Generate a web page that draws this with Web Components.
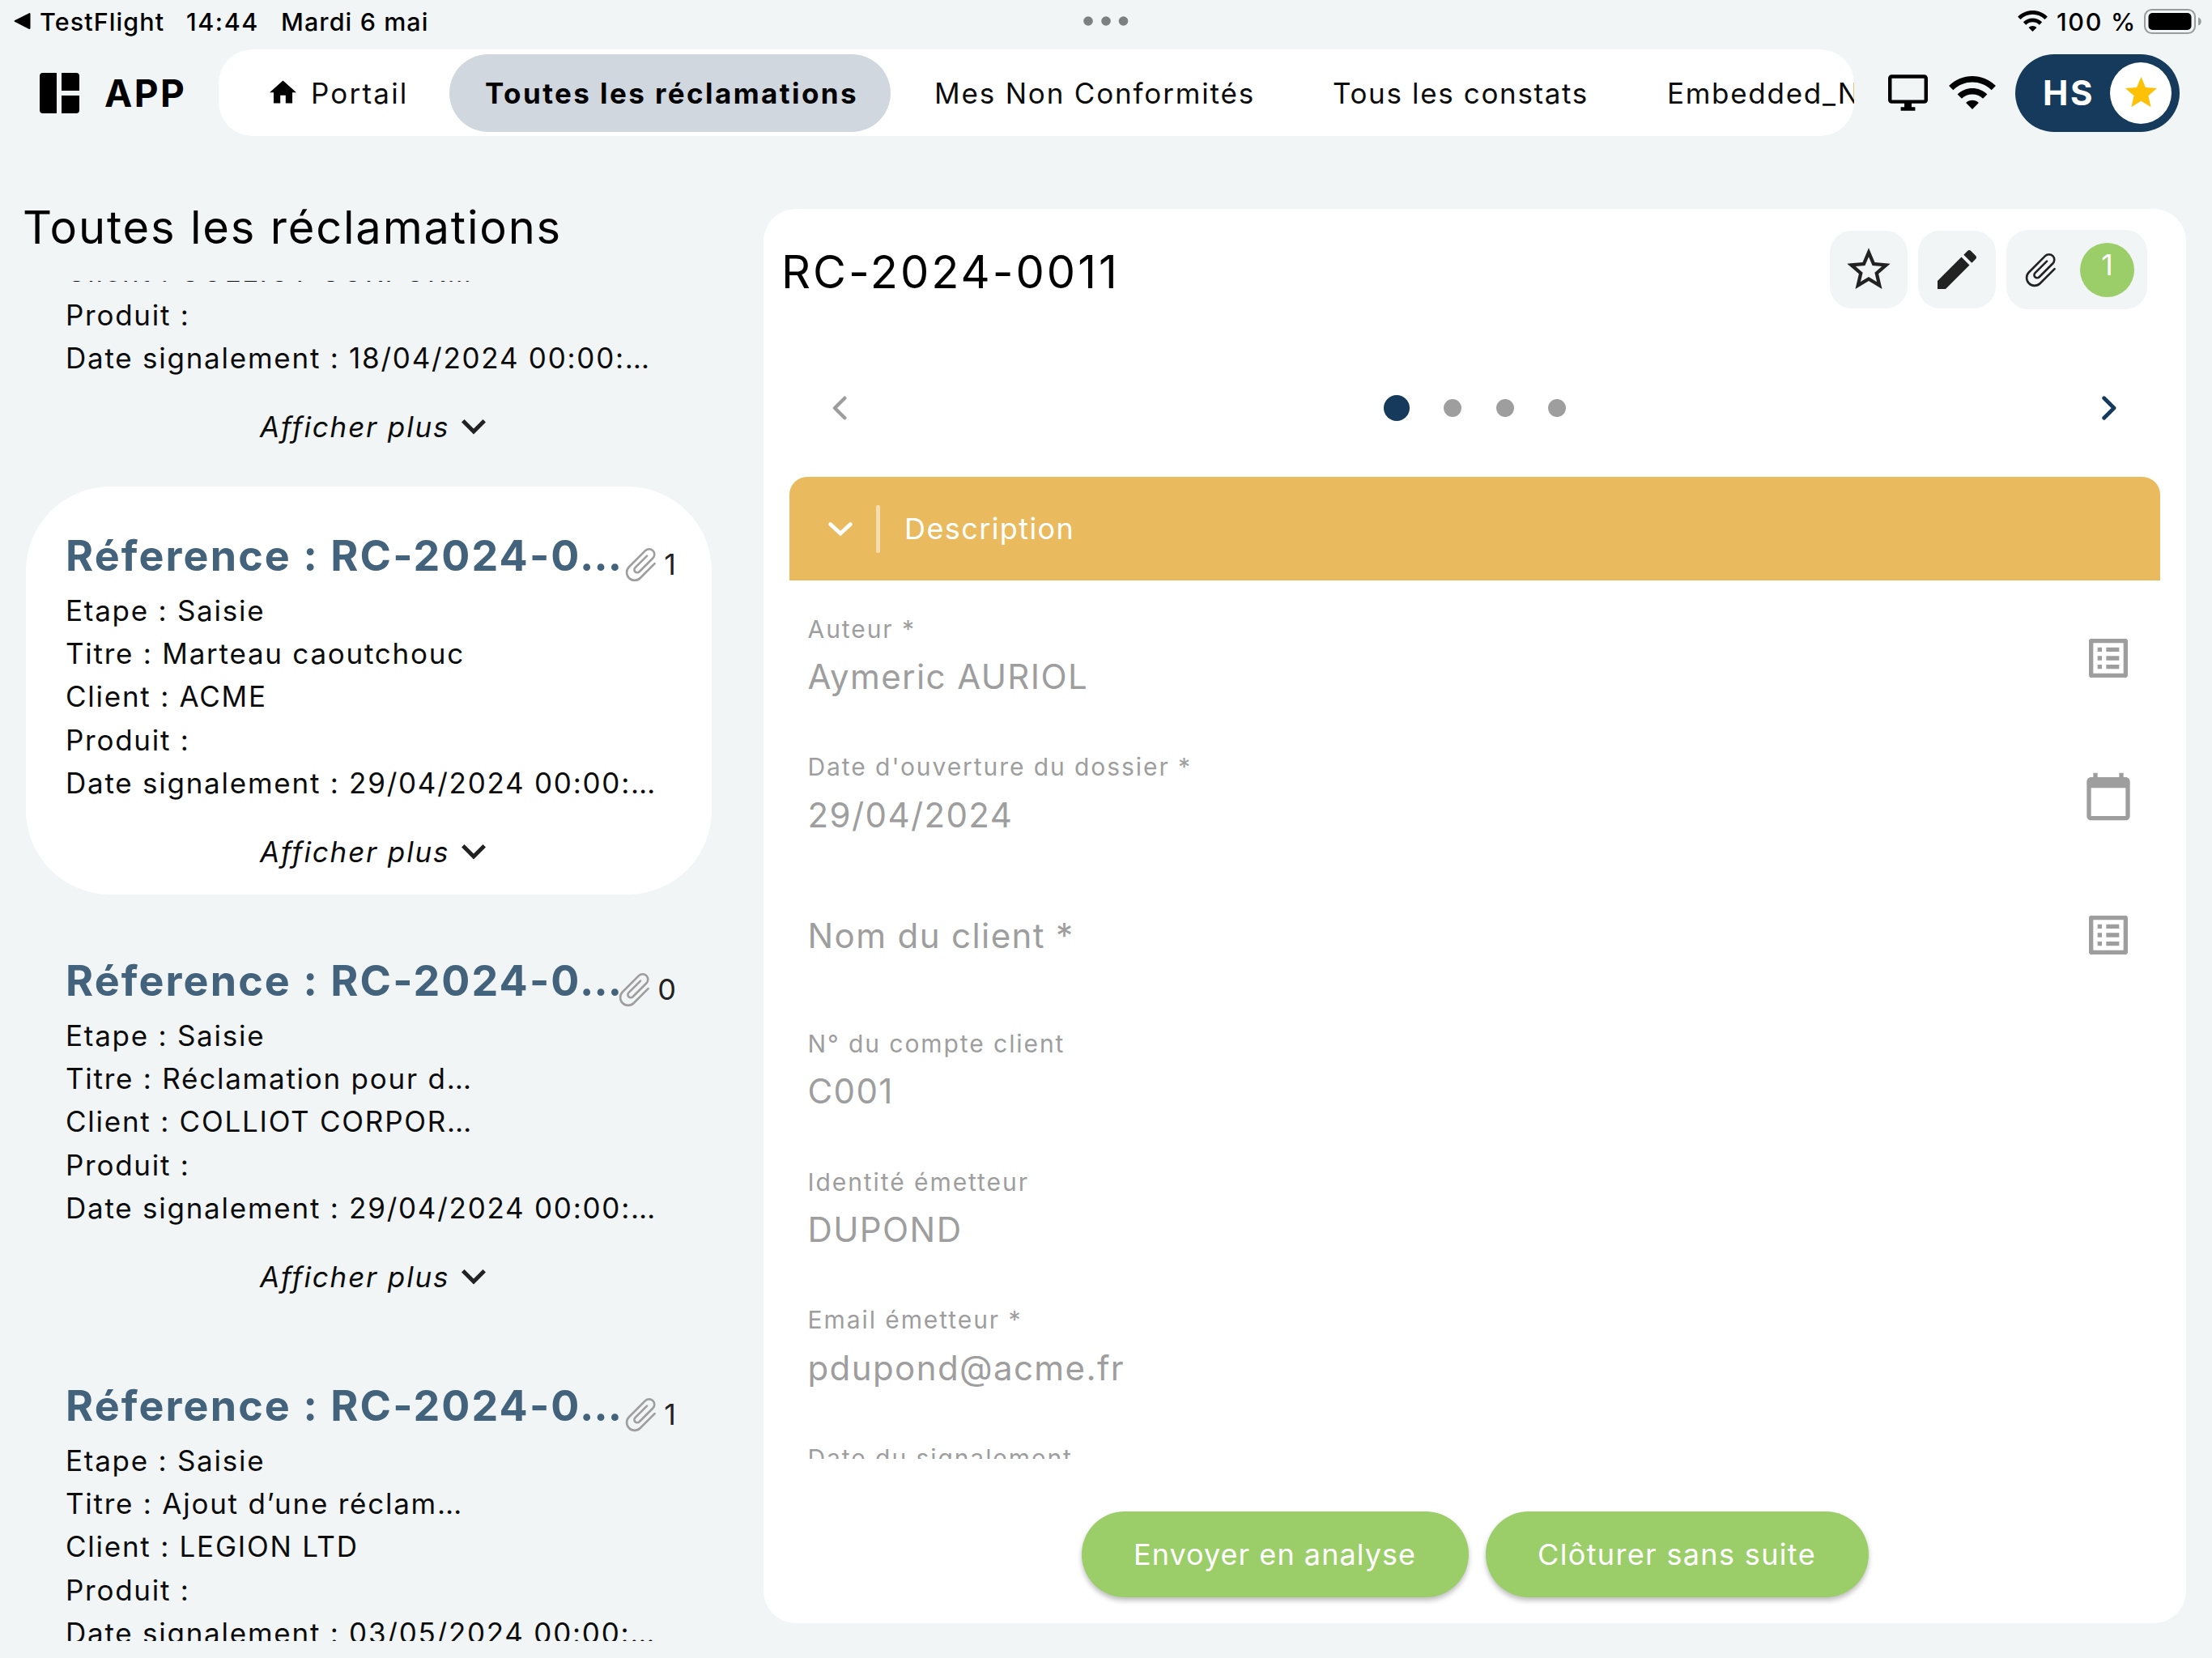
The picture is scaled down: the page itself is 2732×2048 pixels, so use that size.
<!DOCTYPE html>
<html lang="fr">
<head>
<meta charset="utf-8">
<title>Toutes les réclamations</title>
<style>
html,body{margin:0;height:100%;overflow:hidden}
body{background:#f1f5f6;color:#000;font-family:Inter,"Liberation Sans",sans-serif}
</style>
</head>
<body>
<claims-app></claims-app>
<script>
const define = (name, render) => customElements.define(name, class extends HTMLElement {
  constructor() { super(); this.attachShadow({ mode: 'open' }); }
  connectedCallback() { this.shadowRoot.innerHTML = render(this); }
});

const paperclip = '<path transform="rotate(45)" d="M11.5-12.7V12.6A9.75 9.75 0 0 1-8 12.6V-15.8A6.6 6.6 0 0 1 5.2-15.8V7.9A3.6 3.6 0 0 1-2 7.9V-12.7" fill="none" stroke="currentColor" stroke-width="2.6" stroke-linecap="round"/>';
const wifi = '<path d="M1 9l2 2c4.97-4.97 13.03-4.97 18 0l2-2C16.93 2.93 7.08 2.93 1 9zm8 8l3 3 3-3c-1.65-1.66-4.34-1.66-6 0zm-4-4l2 2c2.76-2.76 7.24-2.76 10 0l2-2C15.14 9.14 8.87 9.14 5 13z"/>';
/* name: [viewBox, width, height, content] */
const ICONS = {
  back: ['0 0 21 20', 21, 20, '<path d="M1 9.2Q0 10 1 10.8L18.5 19.7Q20.5 20.5 20.5 18.5V1.5Q20.5-.5 18.5.4Z"/>'],
  more: ['0 0 56 12', 56, 12, '<g fill="#7d8081"><circle cx="6" cy="6" r="5.8"/><circle cx="28" cy="6" r="5.8"/><circle cx="49.5" cy="6" r="5.8"/></g>'],
  battery: ['0 0 71 31', 71, 31, '<rect x="1" y="1" width="62" height="29" rx="8.5" fill="none" stroke="#999c9d" stroke-width="2"/><rect x="5.5" y="5" width="53" height="21" rx="5"/><path d="M67 10.5c5 1.5 5 8.500 0 10z" fill="#999c9d"/>'],
  wifis: ['1 4.400 22 15.600', 37, 26, wifi],
  wifi: ['1 4.400 22 15.600', 58, 41, wifi],
  logo: ['0 0 50 50', 50, 50, '<path d="M5 0H22V50H5Q1 50 1 46V4Q1 0 5 0ZM28 0H46Q50 0 50 4V22H28ZM28 28H50V46Q50 50 46 50H28Z"/>'],
  home: ['2 3 20 17', 33, 29, '<path d="M10 20v-6h4v6h5v-8h3L12 3 2 12h3v8z"/>'],
  screen: ['1 2 22 20', 49, 45, '<path d="M21 2H3c-1.100 0-2 .9-2 2v12c0 1.100.9 2 2 2h7v2H8v2h8v-2h-2v-2h7c1.100 0 2-.9 2-2V4c0-1.100-.9-2-2-2zm0 14H3V4h18v12z"/>'],
  star: ['0 0 24 24', 47, 47, '<path d="M12 17.270L18.180 21l-1.640-7.030L22 9.240l-7.190-.61L12 2 9.190 8.630 2 9.240l5.460 4.730L5.820 21z"/>'],
  starline: ['0 0 24 24', 64, 64, '<path d="M22 9.240l-7.190-.62L12 2 9.190 8.630 2 9.240l5.460 4.730L5.820 21 12 17.270 18.180 21l-1.630-7.030L22 9.240zM12 15.400l-3.760 2.270 1-4.280-3.320-2.880 4.380-.38L12 6.100l1.710 4.040 4.380.38-3.320 2.880 1 4.280L12 15.400z"/>'],
  edit: ['0 0 24 24', 64, 64, '<path d="M3 17.250V21h3.750L17.810 9.940l-3.750-3.750L3 17.250zM20.710 7.040c.39-.39.39-1.020 0-1.410l-2.340-2.340c-.39-.39-1.020-.39-1.410 0l-1.830 1.830 3.750 3.750 1.830-1.830z"/>'],
  clip: ['-19.500 -21 39 43', 39, 43, paperclip],
  more_down: ['6 7.840 12 7.410', 30, 18.5, '<path d="M7.410 7.840L12 12.420l4.590-4.580L18 9.250l-6 6-6-6z"/>'],
  down: ['0 0 30 17', 30, 17, '<path d="M2.600 2.600L15 14L27.400 2.600" fill="none" stroke="currentColor" stroke-width="4.800" stroke-linecap="round"/>'],
  left: ['0 0 18 30', 18, 30, '<path d="M15.300 2.700L3 15L15.300 27.300" fill="none" stroke="currentColor" stroke-width="4.400" stroke-linecap="round" stroke-linejoin="round"/>'],
  right: ['0 0 18 30', 18, 30, '<path d="M2.700 2.700L15 15L2.700 27.300" fill="none" stroke="currentColor" stroke-width="4.800" stroke-linecap="round" stroke-linejoin="round"/>'],
  list: ['0 0 24 24', 64, 64, '<path d="M19 5v14H5V5h14m1.100-2H3.900c-.5 0-.9.4-.9.9v16.200c0 .4.4.9.9.9h16.200c.4 0 .9-.5.9-.9V3.900c0-.5-.5-.9-.9-.9zM11 7h6v2h-6V7zm0 4h6v2h-6v-2zm0 4h6v2h-6zM7 7h2v2H7zm0 4h2v2H7zm0 4h2v2H7z"/>'],
  calendar: ['0 0 24 24', 64, 64, '<path d="M20 3h-1V1h-2v2H7V1H5v2H4c-1.100 0-2 .9-2 2v16c0 1.100.9 2 2 2h16c1.100 0 2-.9 2-2V5c0-1.100-.9-2-2-2zm0 18H4V8h16v13z"/>']
};

define('ui-icon', el => {
  const [box, w, h, body] = ICONS[el.getAttribute('name')];
  return `<style>:host{display:block;flex:none}svg{display:block;overflow:visible}</style>
  <svg viewBox="${box}" width="${w}" height="${h}" fill="currentColor">${body}</svg>`;
});

define('status-bar', () => `<style>
  :host{display:grid;grid-template-columns:1fr auto 1fr;align-items:center;height:52px;flex:none;font-size:30.5px;font-weight:450;white-space:nowrap}
  .l,.r{display:flex;align-items:center}
  .l{padding-left:17px;letter-spacing:1.100px}
  .l ui-icon{margin-right:11px}
  .app{width:181px}.time{width:117px;letter-spacing:1.6px}
  .r{justify-content:flex-end;padding-right:13px}
  .pc{width:108px;margin-left:11px;letter-spacing:1.7px}
  </style>
  <div class="l"><ui-icon name="back"></ui-icon><span class="app">TestFlight</span><span class="time">14:44</span><span>Mardi 6 mai</span></div>
  <ui-icon name="more"></ui-icon>
  <div class="r"><ui-icon name="wifis"></ui-icon><span class="pc">100 %</span><ui-icon name="battery"></ui-icon></div>`);

define('nav-item', el => `<style>
  :host{display:flex;align-items:center;flex:none;box-sizing:border-box;height:96px;font-size:35px;white-space:nowrap;color:#0c0c0d}
  :host([active]){background:#d0d7de;border-radius:48px;font-weight:700;color:#000}
  ui-icon{color:#000;margin-right:18px;margin-top:-2px}
  </style>${el.hasAttribute('icon') ? `<ui-icon name="${el.getAttribute('icon')}"></ui-icon>` : ''}<slot></slot>`);

define('app-header', () => `<style>
  :host{display:flex;align-items:center;height:107px;flex:none;margin-top:9px;padding-left:48px}
  .brand{width:141px;margin-left:31px;font-size:46px;font-weight:700;letter-spacing:2.43px}
  nav{display:flex;align-items:center;width:2020px;height:107px;flex:none;background:#fff;border-radius:42px;overflow:hidden}
  .screen{margin-left:42px}.wifi{margin:0 24px 0 26px}
  .user{display:flex;align-items:center;box-sizing:border-box;width:203px;height:96px;padding:0 10px 0 34px;justify-content:space-between;background:#153a5b;border-radius:48px;color:#fff;font-size:42px;font-weight:700;letter-spacing:2.6px}
  .badge{display:flex;align-items:center;justify-content:center;width:76px;height:76px;border-radius:50%;background:#fff;color:#ffc107}
  </style>
  <ui-icon name="logo"></ui-icon><span class="brand">APP</span>
  <nav>
    <nav-item icon="home" style="width:285px;padding-left:63px;letter-spacing:2.200px">Portail</nav-item>
    <nav-item active style="width:545px;padding-left:44px;letter-spacing:2.420px">Toutes les réclamations</nav-item>
    <nav-item style="width:492px;margin-left:54px;letter-spacing:1.830px">Mes Non Conformités</nav-item>
    <nav-item style="width:413px;letter-spacing:1.640px">Tous les constats</nav-item>
    <nav-item style="letter-spacing:1.710px">Embedded_NC</nav-item>
  </nav>
  <ui-icon class="screen" name="screen"></ui-icon><ui-icon class="wifi" name="wifi"></ui-icon>
  <div class="user"><span>HS</span><span class="badge"><ui-icon name="star"></ui-icon></span></div>`);

define('claim-card', el => {
  const a = n => el.getAttribute(n) || '';
  return `<style>
  :host{display:block;box-sizing:border-box;flex:none;width:847px;height:504px;padding:54.400px 44px 0 49px;border-radius:104px;color:#0c0c0d;white-space:nowrap}
  :host([selected]){background:#fff}
  .head{display:flex;height:64px;align-items:center;justify-content:space-between}
  .ref{flex:1;min-width:0;font-size:52px;line-height:64px;font-weight:700;letter-spacing:2.120px;color:#43627b}
  .files{display:flex;align-items:center;padding-top:20px;gap:9px;color:#9e9e9e}
  .files span{color:#222;font-size:36px}
  .row{font-size:35px;line-height:53.350px;letter-spacing:1.75px}
  .rows{margin-top:8.400px}
  .more{display:flex;align-items:center;height:50px;margin-top:33px;padding-left:240px;font-size:35px;font-style:italic;letter-spacing:1.84px}
  .more span{width:249px}.more ui-icon{color:#222}
  </style>
  <div class="head"><span class="ref">Réference : RC-2024-0…</span><div class="files"><ui-icon name="clip"></ui-icon><span>${a('files')}</span></div></div>
  <div class="rows">
    <div class="row">Etape : Saisie</div>
    <div class="row">Titre : ${a('titre')}</div>
    <div class="row">Client : ${a('client')}</div>
    <div class="row">Produit :</div>
    <div class="row">Date signalement : ${a('date')} 00:00:…</div>
  </div>
  <div class="more"><span>Afficher plus</span><ui-icon name="more_down"></ui-icon></div>`;
});

define('claims-list', () => `<style>
  :host{display:flex;flex-direction:column;width:943px;flex:none}
  h1{margin:0;box-sizing:border-box;height:179px;padding:78.500px 0 0 28px;font-size:56px;line-height:68px;font-weight:400;letter-spacing:1.82px}
  .scroll{display:flex;flex-direction:column;gap:21px;box-sizing:border-box;height:1680px;padding-left:32px;overflow:hidden}
  claim-card:first-child{margin-top:-271.200px}
  </style>
  <h1>Toutes les réclamations</h1>
  <div class="scroll">
    <claim-card titre="Réclamation pour d…" client="COLLIOT CORPOR…" date="18/04/2024" files="0"></claim-card>
    <claim-card selected titre="Marteau caoutchouc" client="ACME" date="29/04/2024" files="1"></claim-card>
    <claim-card titre="Réclamation pour d…" client="COLLIOT CORPOR…" date="29/04/2024" files="0"></claim-card>
    <claim-card titre="Ajout d’une réclam…" client="LEGION LTD" date="03/05/2024" files="1"></claim-card>
  </div>`);

define('form-field', el => {
  const l = el.getAttribute('label'), i = el.getAttribute('icon');
  return `<style>
  :host{display:flex;box-sizing:border-box;height:170.700px;flex:none;padding:0 64px 0 54.500px;color:#9e9e9e;white-space:nowrap}
  .text{flex:1;padding-top:41.500px}
  :host(:not([label])) .text{padding-top:67px}
  .label{font-size:30px;line-height:37px;margin-bottom:10.500px;letter-spacing:1.93px}
  .value{font-size:42px;line-height:60px;letter-spacing:1.4px}
  ui-icon{margin-top:64px}
  </style><div class="text">${l ? `<div class="label">${l}</div>` : ''}<div class="value"><slot></slot></div></div>${i ? `<ui-icon name="${i}"></ui-icon>` : ''}`;
});

define('action-button', () => `<style>
  :host{display:flex;align-items:center;justify-content:center;height:106.500px;border-radius:54px;background:#9bce69;color:#fff;font-size:36px;white-space:nowrap;box-shadow:0 4px 6px rgba(0,0,0,.26)}
  </style><slot></slot>`);

define('claim-detail', () => `<style>
  :host{display:flex;flex-direction:column;box-sizing:border-box;width:1757px;height:1747px;margin-top:90.300px;background:#fff;border-radius:40px;overflow:hidden}
  header{display:flex;align-items:center;height:150px;flex:none;padding:0 48px 0 22px;gap:13px}
  h2{flex:1;margin:0;padding-top:5px;font-size:56px;font-weight:400;letter-spacing:3px}
  .tool{display:flex;align-items:center;justify-content:center;box-sizing:border-box;width:96px;height:96px;border-radius:27px;background:#f1f5f6;color:#222}
  .tool.files{width:174px;height:98px;justify-content:space-between;padding:0 16px 0 23px}
  .count{width:67px;height:67px;border-radius:50%;background:#9bce69;color:#fff;font-size:36px;line-height:54px;text-align:center}
  .pager{display:flex;align-items:center;justify-content:space-between;height:100px;flex:none;margin:46px 86px 35px 85px;color:#153a5b}
  .dots{display:flex;align-items:center;gap:42.500px;padding-left:1px}
  .dots i{width:22px;height:22px;border-radius:50%;background:#9e9e9e}
  .dots i.on{width:32px;height:32px;background:#153a5b}
  .prev{color:#9e9e9e}
  .section{display:flex;align-items:center;height:128px;flex:none;margin:0 32px;padding-left:48px;background:#eaba5f;border-radius:22px 22px 0 0;color:#fff;font-size:36px;letter-spacing:1.4px}
  .bar{width:5px;height:59px;margin:0 30px 0 29px;border-radius:2px;background:rgba(255,255,255,.5)}
  .fields{display:flex;flex-direction:column;height:1085px;flex:none;overflow:hidden}
  .actions{display:flex;justify-content:center;gap:21px;margin-top:64.400px}
  </style>
  <header><h2>RC-2024-0011</h2>
    <div class="tool"><ui-icon name="starline"></ui-icon></div>
    <div class="tool"><ui-icon name="edit"></ui-icon></div>
    <div class="tool files"><ui-icon name="clip"></ui-icon><span class="count">1</span></div>
  </header>
  <div class="pager"><ui-icon class="prev" name="left"></ui-icon><div class="dots"><i class="on"></i><i></i><i></i><i></i></div><ui-icon name="right"></ui-icon></div>
  <div class="section"><ui-icon name="down"></ui-icon><span class="bar"></span>Description</div>
  <div class="fields">
    <form-field label="Auteur *" icon="list">Aymeric AURIOL</form-field>
    <form-field label="Date d'ouverture du dossier *" icon="calendar">29/04/2024</form-field>
    <form-field icon="list">Nom du client *</form-field>
    <form-field label="N° du compte client">C001</form-field>
    <form-field label="Identité émetteur">DUPOND</form-field>
    <form-field label="Email émetteur *">pdupond@acme.fr</form-field>
    <form-field label="Date du signalement"></form-field>
  </div>
  <div class="actions"><action-button style="width:478px;letter-spacing:1.050px">Envoyer en analyse</action-button><action-button style="width:473px;letter-spacing:1.350px">Clôturer sans suite</action-button></div>`);

define('claims-app', () => `<style>
  :host{display:flex;flex-direction:column;width:2732px;height:2048px;overflow:hidden}
  main{display:flex;align-items:flex-start}
  </style>
  <status-bar></status-bar><app-header></app-header>
  <main><claims-list></claims-list><claim-detail></claim-detail></main>`);
</script>
</body>
</html>
